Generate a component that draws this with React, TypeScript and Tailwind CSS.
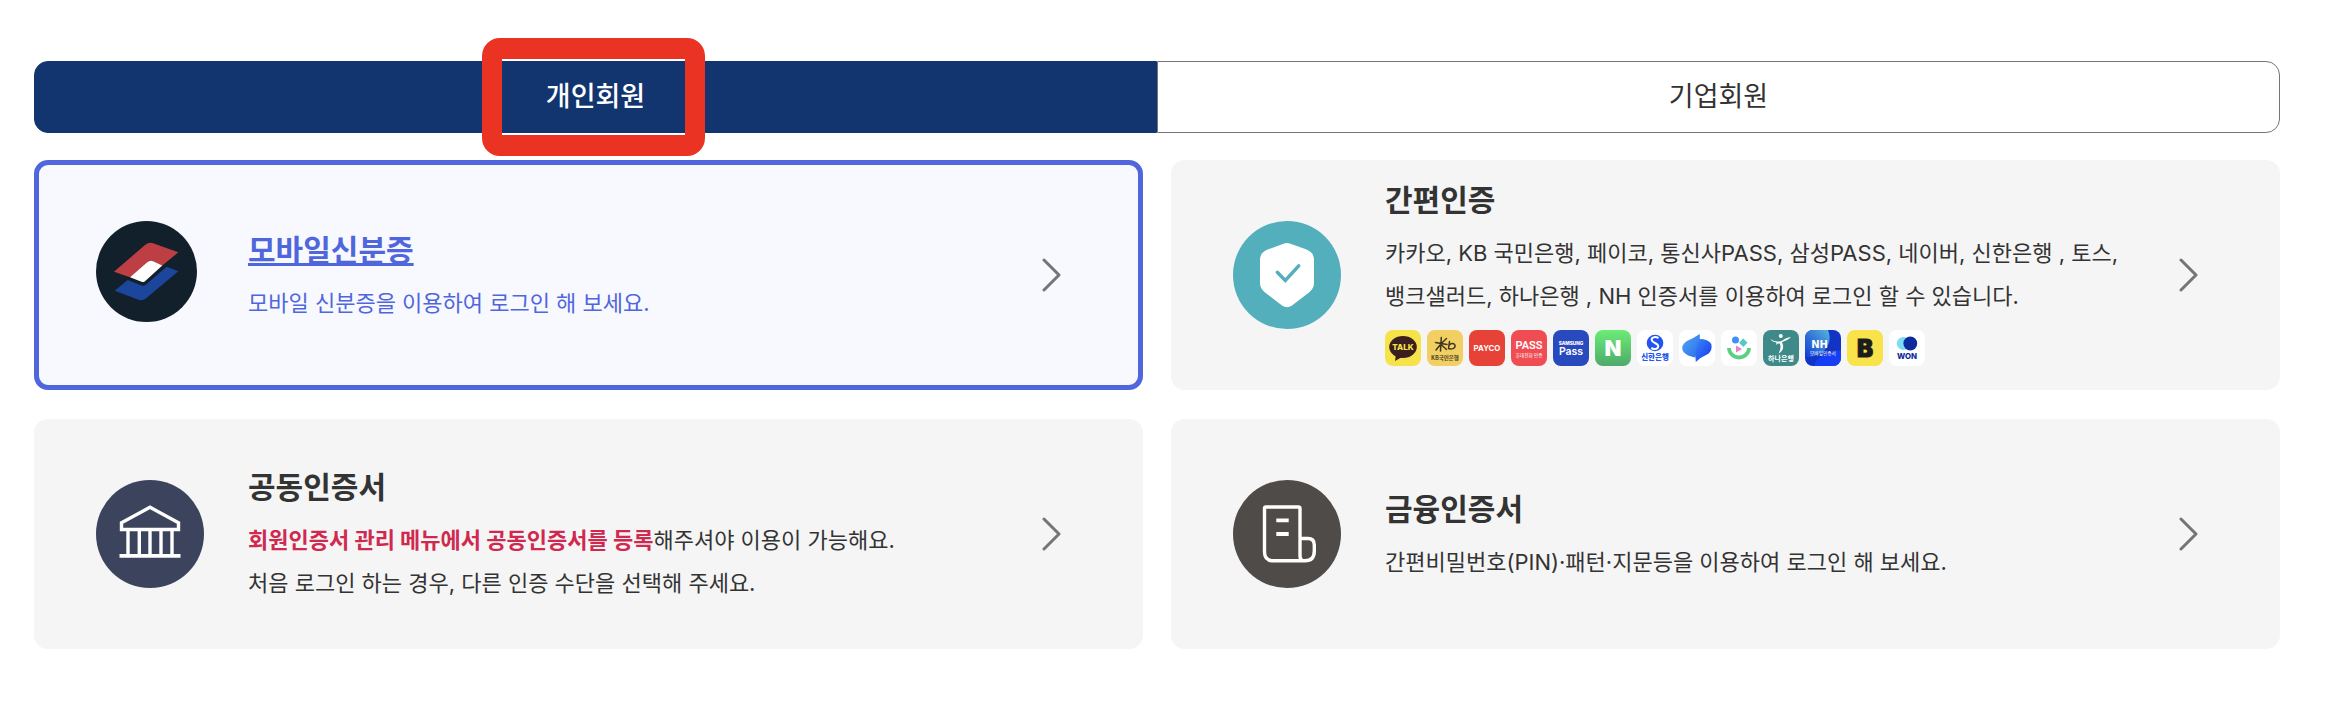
import { useState } from 'react';
import type { ReactNode } from 'react';
import clsx from 'clsx';

interface AuthCardProps {
  href: string;
  icon: ReactNode;
  title: string;
  active?: boolean;
  children: ReactNode;
}

function MobileIdIcon() {
  return (
    <svg viewBox="0 0 101 101" className="size-[101px]" aria-hidden="true">
      <circle cx="50.5" cy="50.5" r="50.5" fill="#11202b" />
      <path d="M18 50.7 L49 24 Q53 20.6 57 22.2 L82.3 31.3 L66.3 44.6 L54 39.7 L34 56.3 Z" fill="#bd3f43" />
      <path d="M34 56.3 L51 41.5 Q54 38.8 57 40.3 L66.3 44.4 L49 60.2 Q47.5 61.5 45.5 60.8 Z" fill="#fff" />
      <path d="M18.7 69.8 L31.7 59 L45.5 64.6 Q48 65.4 50 63.6 L70.7 45.7 L82.3 50.3 L51 76.5 Q47 80.2 42.5 78.7 Z" fill="#1b469b" />
    </svg>
  );
}

function ShieldIcon() {
  return (
    <svg viewBox="0 0 108 108" className="size-[108px]" aria-hidden="true">
      <circle cx="54" cy="54" r="54" fill="#54afbc" />
      <path
        d="M50.5 22.7 Q54 21.3 57.5 22.7 L73.5 28.6 Q81 31.5 81 39 V62 Q81 67.5 76 71.5 L59 84.5 Q54 88 49 84.5 L32 71.5 Q27 67.5 27 62 V39 Q27 31.5 34.5 28.6 Z"
        fill="#fff"
      />
      <path d="M44.3 51.3 L52.3 59.5 L65.7 44.8" fill="none" stroke="#54afbc" strokeWidth="3.4" strokeLinecap="round" />
    </svg>
  );
}

function BankIcon() {
  return (
    <svg viewBox="0 0 108 108" className="size-[108px]" aria-hidden="true">
      <circle cx="54" cy="54" r="54" fill="#3c435d" />
      <g fill="none" stroke="#fff" strokeWidth="3.4">
        <path d="M25.5 49.5 V42.8 L54 27.3 L82.5 42.8 V49.5 Z" />
        <path d="M32 49 V75 M43.3 49 V75 M54 49 V75 M65 49 V75 M76 49 V75" />
        <path d="M23.5 75.8 H84.5" strokeWidth="3.8" />
      </g>
    </svg>
  );
}

function DocumentIcon() {
  return (
    <svg viewBox="0 0 108 108" className="size-[108px]" aria-hidden="true">
      <circle cx="54" cy="54" r="54" fill="#4f4b49" />
      <g fill="none" stroke="#fff" strokeWidth="3.4" strokeLinejoin="round">
        <path d="M67 58 V28.5 Q67 27 65.5 27 H33 Q31.5 27 31.5 28.5 V72 Q31.5 80.8 40.5 80.8 H72 Q81.3 80.8 81.3 71 V65 Q81.3 58.5 75 58.5 H67 V76 Q67 80.8 71.5 80.8" />
        <path d="M43.3 40.4 H55.7 M43.3 54 H55.7" strokeWidth="3.8" />
      </g>
    </svg>
  );
}

function Chevron() {
  return (
    <svg viewBox="0 0 20 34" className="h-[34px] w-5 shrink-0" aria-hidden="true">
      <path d="M2 2 L17 17 L2 32" fill="none" stroke="#757575" strokeWidth="3" strokeLinecap="round" strokeLinejoin="round" />
    </svg>
  );
}

const KR = '"Noto Sans CJK KR", sans-serif';
const EN = 'Inter, sans-serif';

function ProviderLogo({ label, bg, children }: { label: string; bg: string; children: ReactNode }) {
  return (
    <svg viewBox="0 0 36 36" role="img" aria-label={label} className="size-9 rounded-lg" textAnchor="middle">
      <rect width="36" height="36" fill={bg} />
      {children}
    </svg>
  );
}

function ProviderLogos() {
  return (
    <div className="mt-3 mb-2 flex gap-1.5">
      <ProviderLogo label="카카오" bg="#f6e24b">
        <ellipse cx="18" cy="17" rx="13.8" ry="11" fill="#3b1e1e" />
        <path d="M11 24 L10 31 L18 26.5 Z" fill="#3b1e1e" />
        <text x="18" y="20.2" fontFamily={EN} fontSize="8" fontWeight="800" fill="#f6e24b">TALK</text>
      </ProviderLogo>
      <ProviderLogo label="KB 국민은행" bg="#f2cf63">
        <g fill="none" stroke="#3d3621" strokeWidth="1.5" strokeLinecap="round">
          <path d="M14.3 7.5 L13.5 21 M8.5 12.5 L20 14.5 M19.5 8.5 Q14 13 9 20 M14 14.5 L19.5 19.5" />
          <path d="M22.5 11.5 L21.5 18.5 M21.8 15.5 Q25 12 27.5 14.3 Q29.3 17 26 18.6 Q23.5 19.3 21.5 18.5" />
        </g>
        <text x="18" y="29.5" fontFamily={KR} fontSize="5.5" fontWeight="700" fill="#4b4228">KB국민은행</text>
      </ProviderLogo>
      <ProviderLogo label="페이코" bg="#e74238">
        <text x="18" y="21" fontFamily={EN} fontSize="7.8" fontWeight="700" fill="#fff">PAYCO</text>
      </ProviderLogo>
      <ProviderLogo label="통신사PASS" bg="#ef4d53">
        <text x="18" y="18.5" fontFamily="Roboto, sans-serif" fontSize="11" fontWeight="600" fill="#fff">PASS</text>
        <text x="18" y="26.5" fontFamily={KR} fontSize="4.7" fill="#fff">휴대전화 인증</text>
      </ProviderLogo>
      <ProviderLogo label="삼성PASS" bg="#2949be">
        <text x="18" y="14.5" fontFamily={EN} fontSize="4.7" fontWeight="800" fill="#fff">SAMSUNG</text>
        <text x="18" y="25" fontFamily={EN} fontSize="10.5" fontWeight="600" fill="#fff">Pass</text>
      </ProviderLogo>
      <ProviderLogo label="네이버" bg="url(#naver)">
        <defs>
          <linearGradient id="naver" x1="0" y1="0" x2="0" y2="1">
            <stop offset="0" stopColor="#6bec75" />
            <stop offset="1" stopColor="#4eaa6b" />
          </linearGradient>
        </defs>
        <text x="18" y="26" fontFamily={EN} fontSize="22" fontWeight="900" fill="#fff">N</text>
      </ProviderLogo>
      <ProviderLogo label="신한은행" bg="#fff">
        <circle cx="18" cy="13" r="8.3" fill="#2154f0" />
        <path d="M21.5 8 Q17.5 5.8 15 8.3 Q13.5 11 18 13 Q22.5 15 20.8 17.8 Q18.5 20.3 14.3 18" fill="none" stroke="#fff" strokeWidth="2" />
        <text x="18" y="30" fontFamily={KR} fontSize="7.5" fontWeight="900" fill="#2154f0">신한은행</text>
      </ProviderLogo>
      <ProviderLogo label="토스" bg="#fff">
        <defs>
          <linearGradient id="tossLight" x1="0" y1="0" x2="1" y2="1">
            <stop offset="0" stopColor="#4fa5f8" />
            <stop offset="1" stopColor="#2b6fe9" />
          </linearGradient>
          <linearGradient id="tossDark" x1="0" y1="0" x2="1" y2="1">
            <stop offset="0" stopColor="#3b86f7" />
            <stop offset="1" stopColor="#1238f0" />
          </linearGradient>
        </defs>
        <path d="M20.7 4 Q22 16 16 27.5 Q8 26 4.5 22 Q0.5 15.5 8 11 Q15 8 20.7 4 Z" fill="url(#tossLight)" />
        <path d="M20.5 9 Q29 9 32.3 14 Q34 21 28 24.5 Q21 27.5 16.8 32 Q15 19 20.5 9 Z" fill="url(#tossDark)" />
      </ProviderLogo>
      <ProviderLogo label="뱅크샐러드" bg="#fff">
        <circle cx="14.5" cy="10" r="3.5" fill="#3f92f4" />
        <path d="M22.3 8.5 L26.5 12.7 L22.3 16.9 L18.1 12.7 Z" fill="#54c8c8" />
        <path d="M15 15.5 L21 19 L15 22.5 Z" fill="#ef7fc9" />
        <path d="M8 18 A10 9.5 0 0 0 28 18" fill="none" stroke="#5bcf82" strokeWidth="3.8" />
      </ProviderLogo>
      <ProviderLogo label="하나은행" bg="#3e8a89">
        <circle cx="17.8" cy="6" r="2" fill="#fff" />
        <path d="M7.5 9 Q12 12.500 18 11.200 Q23 7.500 28 6.800 Q26.500 9.500 19 12 Q22.500 20 15.500 23.500 Q19 17.500 16.500 13.200 Q14 13.500 13 15 L13.500 12.500 Q9 12 7.500 9 Z" fill="#fff" />
        <text x="18" y="30.5" fontFamily={KR} fontSize="7" fontWeight="700" fill="#fff">하나은행</text>
      </ProviderLogo>
      <ProviderLogo label="NH" bg="#1234c4">
        <defs>
          <linearGradient id="nhTop" x1="1" y1="0" x2="0" y2="1">
            <stop offset="0" stopColor="#55b4d9" />
            <stop offset="1" stopColor="#1238d6" />
          </linearGradient>
        </defs>
        <path d="M0 0 H23 Q28 12 18 22 Q10 28 0 27 Z" fill="url(#nhTop)" />
        <path d="M36 20 V36 H9 Q12 24 36 20 Z" fill="#163ff5" />
        <text x="14.5" y="18" fontFamily='"DejaVu Sans", sans-serif' fontSize="10" fontWeight="700" fill="#fff">NH</text>
        <text x="18" y="25" fontFamily={KR} fontSize="4.7" fill="#fff">모바일인증서</text>
      </ProviderLogo>
      <ProviderLogo label="KB" bg="#f9e34b">
        <text x="18" y="27" fontFamily={EN} fontSize="24" fontWeight="900" fill="#1c1c1c" stroke="#1c1c1c">B</text>
      </ProviderLogo>
      <ProviderLogo label="우리WON" bg="#fff">
        <circle cx="14.3" cy="13.5" r="6.5" fill="#7cdcf4" />
        <circle cx="21.3" cy="13.5" r="6.9" fill="#0c2a9b" />
        <text x="18" y="29" fontFamily={EN} fontSize="7.8" fontWeight="800" fill="#0c2a9b">WON</text>
      </ProviderLogo>
    </div>
  );
}

function AuthCard({ href, icon, title, active, children }: AuthCardProps) {
  return (
    <a
      href={href}
      className={clsx(
        'flex min-h-[230px] items-center rounded-[14px] border-[5px] pr-[76px] pl-[57px]',
        active ? 'border-[#5066dc] bg-[#f8f9ff] text-[#5066dc]' : 'border-transparent bg-[#f5f5f5] text-[#333]'
      )}
    >
      <div className="size-[108px] shrink-0">{icon}</div>
      <div className="ml-11 flex-1">
        <h2 className={clsx('mb-2 text-[30px] leading-[48px] font-bold', active && 'underline decoration-[3px] underline-offset-2')}>
          {title}
        </h2>
        <div className="text-[22px] leading-[43px] whitespace-nowrap">{children}</div>
      </div>
      <Chevron />
    </a>
  );
}

export default function App() {
  const [tab, setTab] = useState<'personal' | 'company'>('personal');

  const tabClass = (selected: boolean) =>
    clsx(
      'h-[72px] flex-1 border text-[27px] first:rounded-l-[14px] last:rounded-r-[14px]',
      selected ? 'border-[#13356f] bg-[#13356f] font-medium text-white' : 'border-[#757575] bg-white text-[#333]'
    );

  return (
    <main className="bg-white pt-[61px] pr-14 pb-[68px] pl-[34px] font-[Inter,'Noto_Sans_CJK_KR',sans-serif]">
      {/* Member type */}
      <div role="tablist" className="flex">
        <button role="tab" aria-selected={tab === 'personal'} className={tabClass(tab === 'personal')} onClick={() => setTab('personal')}>
          <span className="relative inline-block">
            개인회원
            <span className="pointer-events-none absolute top-1/2 -right-[60px] -left-16 h-[118px] -translate-y-1/2 rounded-[18px] border-x-[20px] border-y-[21px] border-[#eb3323]" />
          </span>
        </button>
        <button role="tab" aria-selected={tab === 'company'} className={tabClass(tab === 'company')} onClick={() => setTab('company')}>
          기업회원
        </button>
      </div>

      {/* Login methods */}
      <div className="mt-[27px] grid grid-cols-2 gap-x-7 gap-y-[29px]">
        <AuthCard href="#mobile-id" icon={<MobileIdIcon />} title="모바일신분증" active>
          <p>모바일 신분증을 이용하여 로그인 해 보세요.</p>
        </AuthCard>

        <AuthCard href="#simple" icon={<ShieldIcon />} title="간편인증">
          <p>
            카카오, KB 국민은행, 페이코, 통신사PASS, 삼성PASS, 네이버, 신한은행 , 토스,
            <br />
            뱅크샐러드, 하나은행 , NH 인증서를 이용하여 로그인 할 수 있습니다.
          </p>
          <ProviderLogos />
        </AuthCard>

        <AuthCard href="#joint" icon={<BankIcon />} title="공동인증서">
          <p>
            <strong className="font-bold text-[#d02950]">회원인증서 관리 메뉴에서 공동인증서를 등록</strong>해주셔야 이용이 가능해요.
            <br />
            처음 로그인 하는 경우, 다른 인증 수단을 선택해 주세요.
          </p>
        </AuthCard>

        <AuthCard href="#finance" icon={<DocumentIcon />} title="금융인증서">
          <p>간편비밀번호(PIN)·패턴·지문등을 이용하여 로그인 해 보세요.</p>
        </AuthCard>
      </div>
    </main>
  );
}
